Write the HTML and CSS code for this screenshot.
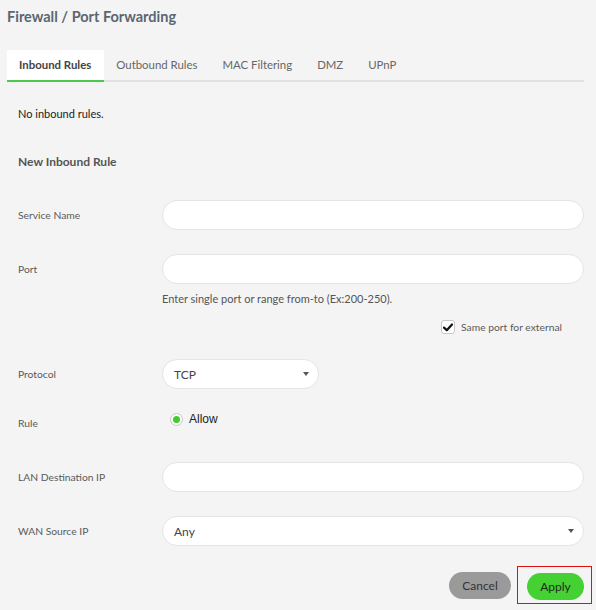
FILE: index.html
```html
<!DOCTYPE html>
<html>
<head>
<meta charset="utf-8">
<link rel="stylesheet" href="styles.css">
</head>
<body>
<div class="page">
  <h1 class="title">Firewall / Port Forwarding</h1>
  <div class="tabs">
    <div class="tab active">Inbound Rules</div>
    <div class="tab">Outbound Rules</div>
    <div class="tab">MAC Filtering</div>
    <div class="tab">DMZ</div>
    <div class="tab">UPnP</div>
  </div>
  <div class="content">
    <p class="empty">No inbound rules.</p>
    <h2 class="section">New Inbound Rule</h2>

    <div class="row row-service">
      <label class="label">Service Name</label>
      <div class="control"><div class="input"></div></div>
    </div>

    <div class="row row-port">
      <label class="label">Port</label>
      <div class="control"><div class="input"></div></div>
    </div>
    <div class="help">Enter single port or range from-to (Ex:200-250).</div>
    <div class="check-row">
      <span class="checkbox">
        <svg width="10" height="9" viewBox="0 0 10 9"><path d="M1 4.6 L3.8 7.3 L9 1.5" fill="none" stroke="#111" stroke-width="2.2" stroke-linecap="round" stroke-linejoin="round"/></svg>
      </span>
      <span class="check-label">Same port for external</span>
    </div>

    <div class="row row-protocol">
      <label class="label">Protocol</label>
      <div class="control">
        <div class="select select-short"><span>TCP</span><span class="caret"></span></div>
      </div>
    </div>

    <div class="row row-rule">
      <label class="label label-rule">Rule</label>
      <div class="control radio-wrap">
        <span class="radio"><span class="dot"></span></span>
        <span class="radio-label">Allow</span>
      </div>
    </div>

    <div class="row row-lan">
      <label class="label">LAN Destination IP</label>
      <div class="control"><div class="input"></div></div>
    </div>

    <div class="row row-wan">
      <label class="label">WAN Source IP</label>
      <div class="control">
        <div class="select select-wide"><span>Any</span><span class="caret"></span></div>
      </div>
    </div>

    <div class="actions">
      <button class="btn btn-cancel">Cancel</button>
      <div class="highlight"><button class="btn btn-apply">Apply</button></div>
    </div>
  </div>
</div>
</body>
</html>
```

FILE: styles.css
```css
* { box-sizing: border-box; }
html, body {
  margin: 0;
  padding: 0;
  background: #f4f4f4;
  font-family: Lato, "Open Sans", "Liberation Sans", sans-serif;
}
.page {
  width: 596px;
  height: 610px;
  overflow: hidden;
}
.title {
  margin: 0;
  padding: 7px 0 0 7px;
  height: 50px;
  font-size: 14.5px;
  line-height: 20px;
  font-weight: 700;
  color: #5b6670;
}
.tabs {
  display: flex;
  margin: 0 12px 0 7px;
  height: 32px;
  border-bottom: 2px solid #e2e2e2;
}
.tab {
  padding: 0 12.5px;
  height: 32px;
  line-height: 30px;
  font-size: 11.4px;
  color: #666;
  font-weight: 400;
}
.tab.active {
  background: #fff;
  color: #444;
  font-weight: 700;
  font-size: 11.4px;
  border-bottom: 2px solid #4cc94a;
  padding: 0 12.5px 0 12px;
}
.content {
  padding: 0 12px 0 18px;
}
.empty {
  margin: 0;
  padding-top: 24px;
  height: 72px;
  line-height: 16px;
  font-size: 11px;
  color: #222;
}
.section {
  margin: 0;
  height: 46px;
  line-height: 16px;
  font-size: 12px;
  font-weight: 700;
  color: #555;
}
.row {
  display: flex;
  align-items: center;
  height: 30px;
}
.label {
  width: 144px;
  flex: none;
  font-size: 10.3px;
  color: #5a5a5a;
}
.control {
  flex: 1;
}
.input, .select {
  height: 30px;
  background: #fff;
  border: 1px solid #e4e4e4;
  border-radius: 15px;
}
.row-service { margin-bottom: 24px; }
.help {
  margin-left: 144px;
  margin-top: 6px;
  height: 18px;
  line-height: 18px;
  font-size: 11px;
  color: #555;
}
.check-row {
  display: flex;
  align-items: center;
  justify-content: flex-end;
  padding-right: 22px;
  margin-top: 10px;
  height: 18px;
}
.checkbox {
  width: 14px;
  height: 14px;
  border: 1px solid #c8c8c8;
  border-radius: 3px;
  background: #fff;
  display: flex;
  align-items: center;
  justify-content: center;
  margin-right: 6px;
}
.check-label {
  font-size: 10.3px;
  color: #5a5a5a;
}
.row-protocol { margin-top: 23px; }
.select {
  display: flex;
  align-items: center;
  justify-content: space-between;
  padding: 0 9.5px 0 11px;
  font-size: 12px;
  color: #444;
}
.select-short { width: 157px; }
.caret {
  width: 0;
  height: 0;
  border-left: 3.5px solid transparent;
  border-right: 3.5px solid transparent;
  border-top: 4px solid #555;
}
.row-rule {
  margin-top: 16px;
  height: 30px;
  align-items: flex-start;
}
.label-rule { padding-top: 12px; }
.radio-wrap {
  display: flex;
  align-items: center;
  padding-left: 8px;
  padding-top: 7px;
}
.radio {
  width: 13px;
  height: 13px;
  border-radius: 50%;
  border: 1px solid #c8c8c8;
  background: #fff;
  display: flex;
  align-items: center;
  justify-content: center;
}
.dot {
  width: 7px;
  height: 7px;
  border-radius: 50%;
  background: #3fcc2c;
}
.radio-label {
  margin-left: 6px;
  font-family: "Liberation Sans", Arial, sans-serif;
  font-size: 12px;
  color: #222;
}
.row-lan { margin-top: 27px; margin-bottom: 24px; }
.actions {
  display: flex;
  justify-content: flex-end;
  align-items: center;
  margin-top: 20px;
  margin-right: -8px;
}
.btn {
  border: none;
  height: 27px;
  border-radius: 14px;
  font-family: Lato, "Open Sans", "Liberation Sans", sans-serif;
  font-size: 12px;
  color: #333;
  padding: 0;
}
.btn-cancel {
  width: 62px;
  background: #9a9a9a;
  margin-right: 6px;
}
.highlight {
  border: 1px solid #e01010;
  padding: 6px 7px 3px 9px;
}
.btn-apply {
  width: 57px;
  background: #45d033;
  color: #1f2a1a;
}
```
